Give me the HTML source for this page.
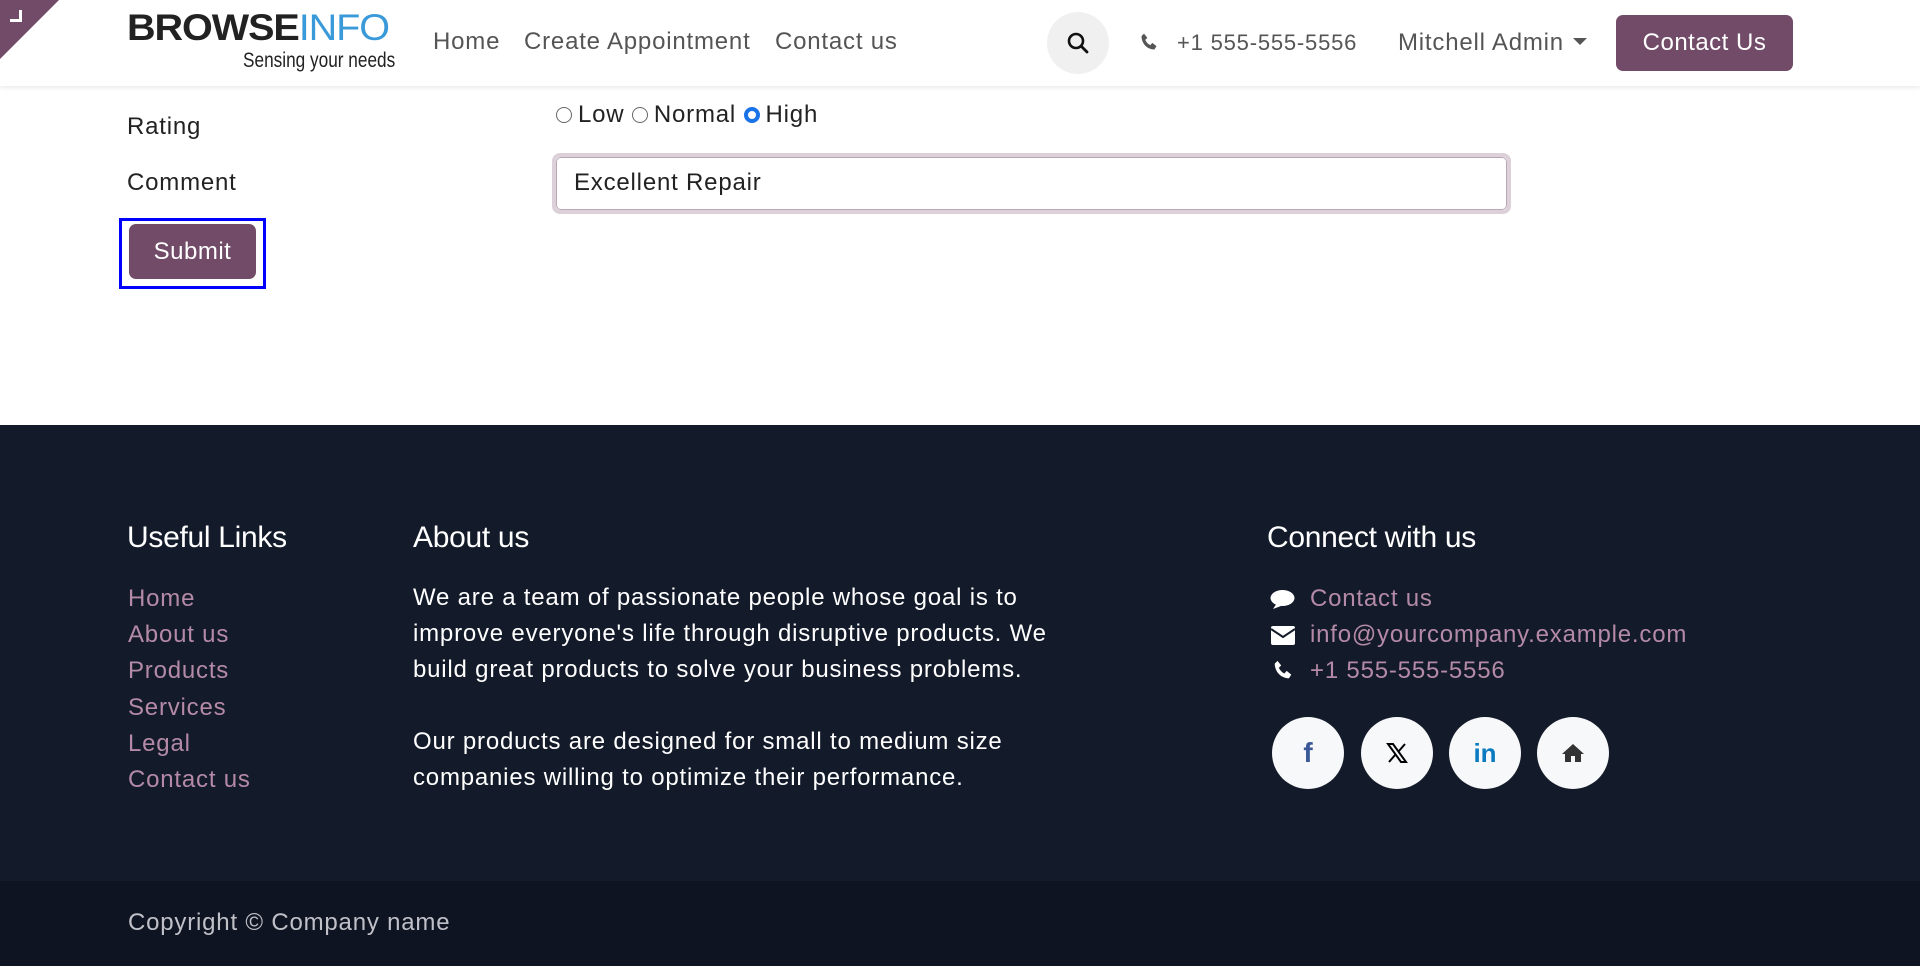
<!DOCTYPE html>
<html><head><meta charset="utf-8"><style>
*{margin:0;padding:0;box-sizing:border-box}
body{width:1920px;height:966px;overflow:hidden;background:#fff;font-family:"Liberation Sans",sans-serif;color:#222;position:relative;letter-spacing:.8px}
.a{position:absolute;white-space:nowrap}
header{position:absolute;left:0;top:0;width:1920px;height:86px;background:#fff;box-shadow:0 2px 4px rgba(0,0,0,.08);z-index:2}
.nav{font-size:24px;color:#555;top:28px}
footer{position:absolute;left:0;top:425px;width:1920px;height:457px;background:#131a29}
.bot{position:absolute;left:0;top:881px;width:1920px;height:85px;background:#0f1422}
.h{color:#fff;font-size:30px;top:521px;letter-spacing:-.3px}
.lk{color:#b48aa8;font-size:24px;left:128px}
.ab{color:#fff;font-size:24px;left:413px;line-height:36px;top:580px}
.ci{color:#b48aa8;font-size:24px;left:1310px}
.soc{position:absolute;width:72px;height:72px;border-radius:50%;background:#f7f8fa;top:717px;display:flex;align-items:center;justify-content:center;letter-spacing:0}
.rad{display:inline-block;width:16px;height:16px;border:1.5px solid #666;border-radius:50%;vertical-align:-1px;margin-right:6px}
</style></head><body>
<header>
<div class="a" style="left:0;top:0;width:0;height:0;border-top:59px solid #714b67;border-right:59px solid transparent"></div>
<div class="a" style="left:10px;top:10px;width:12px;height:12px;border-right:3px solid #fff;border-bottom:3px solid #fff"></div>
<div class="a" style="left:127px;top:7px;font-size:37px;letter-spacing:-1px;color:#222;font-weight:bold;transform:scaleX(1.07);transform-origin:left">BROWSE<span style="color:#3a9ad9;font-weight:normal">INFO</span></div>
<div class="a" style="left:243px;top:49px;font-size:21px;letter-spacing:0;color:#222;transform:scaleX(.82);transform-origin:left">Sensing your needs</div>
<div class="a nav" style="left:433px">Home</div>
<div class="a nav" style="left:524px">Create Appointment</div>
<div class="a nav" style="left:775px">Contact us</div>
<div class="a" style="left:1047px;top:12px;width:62px;height:62px;border-radius:50%;background:#f0f0f0"></div>
<svg class="a" style="left:1066px;top:31px" width="24" height="24" viewBox="0 0 24 24"><circle cx="10" cy="10" r="7" fill="none" stroke="#111" stroke-width="2.6"/><path d="M15 15l6 6" stroke="#111" stroke-width="2.8" stroke-linecap="round"/></svg>
<svg class="a" style="left:1139px;top:32px" width="20" height="20" viewBox="0 0 24 24"><path d="M6 2l4 5-2.5 2.5c1.2 2.8 3.3 5 6 6.3L16 13l5 4-2.5 4C10 21 3 14 3 5z" fill="#555"/></svg>
<div class="a" style="left:1177px;top:30px;font-size:22px;color:#555">+1 555-555-5556</div>
<div class="a" style="left:1398px;top:29px;font-size:24px;color:#555">Mitchell Admin</div>
<div class="a" style="left:1573px;top:38px;width:0;height:0;border-left:7px solid transparent;border-right:7px solid transparent;border-top:7px solid #555"></div>
<div class="a" style="left:1616px;top:15px;width:177px;height:56px;border-radius:7px;background:#714b67;color:#fff;font-size:24px;text-align:center;line-height:56px;letter-spacing:.5px">Contact Us</div>
</header>
<div class="a" style="left:127px;top:113px;font-size:24px">Rating</div>
<div class="a" style="left:556px;top:101px;font-size:24px"><span class="rad"></span>Low <span class="rad"></span>Normal <span class="rad" style="border:4px solid #1a73e8;background:#fff"></span>High</div>
<div class="a" style="left:127px;top:169px;font-size:24px">Comment</div>
<div class="a" style="left:552px;top:153px;width:959px;height:61px;border:4px solid #dcd0d9;border-radius:8px"><div style="width:100%;height:100%;border:1px solid #b9a8b4;border-radius:5px;background:#fff;font-size:24px;padding:11px 0 0 17px">Excellent Repair</div></div>
<div class="a" style="left:119px;top:218px;width:147px;height:71px;border:3px solid #0000ff"></div>
<div class="a" style="left:129px;top:224px;width:127px;height:55px;border-radius:7px;background:#714b67;color:#fff;font-size:24px;text-align:center;line-height:55px;letter-spacing:.5px">Submit</div>
<footer></footer><div class="bot"></div>
<div class="a h" style="left:127px">Useful Links</div>
<div class="a h" style="left:413px">About us</div>
<div class="a h" style="left:1267px">Connect with us</div>
<div class="a lk" style="top:585px">Home</div>
<div class="a lk" style="top:621px">About us</div>
<div class="a lk" style="top:657px">Products</div>
<div class="a lk" style="top:694px">Services</div>
<div class="a lk" style="top:730px">Legal</div>
<div class="a lk" style="top:766px">Contact us</div>
<div class="a ab">We are a team of passionate people whose goal is to<br>improve everyone's life through disruptive products. We<br>build great products to solve your business problems.<br><br>Our products are designed for small to medium size<br>companies willing to optimize their performance.</div>
<svg class="a" style="left:1270px;top:589px" width="25" height="22" viewBox="0 0 25 22"><ellipse cx="12.5" cy="9" rx="12" ry="8" fill="#fff"/><path d="M3 20l4-6 4 3z" fill="#fff"/></svg>
<div class="a ci" style="top:585px">Contact us</div>
<svg class="a" style="left:1271px;top:626px" width="24" height="19" viewBox="0 0 24 19"><rect width="24" height="19" rx="2" fill="#fff"/><path d="M0 3l12 8 12-8" fill="none" stroke="#131a29" stroke-width="2"/></svg>
<div class="a ci" style="top:621px">info@yourcompany.example.com</div>
<svg class="a" style="left:1272px;top:659px" width="22" height="22" viewBox="0 0 24 24"><path d="M6 2l4 5-2.5 2.5c1.2 2.8 3.3 5 6 6.3L16 13l5 4-2.5 4C10 21 3 14 3 5z" fill="#fff"/></svg>
<div class="a ci" style="top:657px">+1 555-555-5556</div>
<div class="soc" style="left:1272px"><span style="font-weight:bold;font-size:28px;color:#3b5998">f</span></div>
<div class="soc" style="left:1361px"><svg width="24" height="24" viewBox="0 0 24 24"><path d="M3 3h5l13 18h-5z" fill="none" stroke="#000" stroke-width="2"/><path d="M20 3L13.5 10.5M4 21l6.5-7.5" stroke="#000" stroke-width="2"/></svg></div>
<div class="soc" style="left:1449px"><span style="font-weight:bold;font-size:26px;color:#0a7bc1">in</span></div>
<div class="soc" style="left:1537px"><svg width="24" height="20" viewBox="0 0 24 20"><path d="M12 1L1 11h3v8h6v-6h4v6h6v-8h3z" fill="#333"/></svg></div>
<div class="a" style="left:128px;top:909px;font-size:24px;color:#c0c0c8">Copyright © Company name</div>
</body></html>
